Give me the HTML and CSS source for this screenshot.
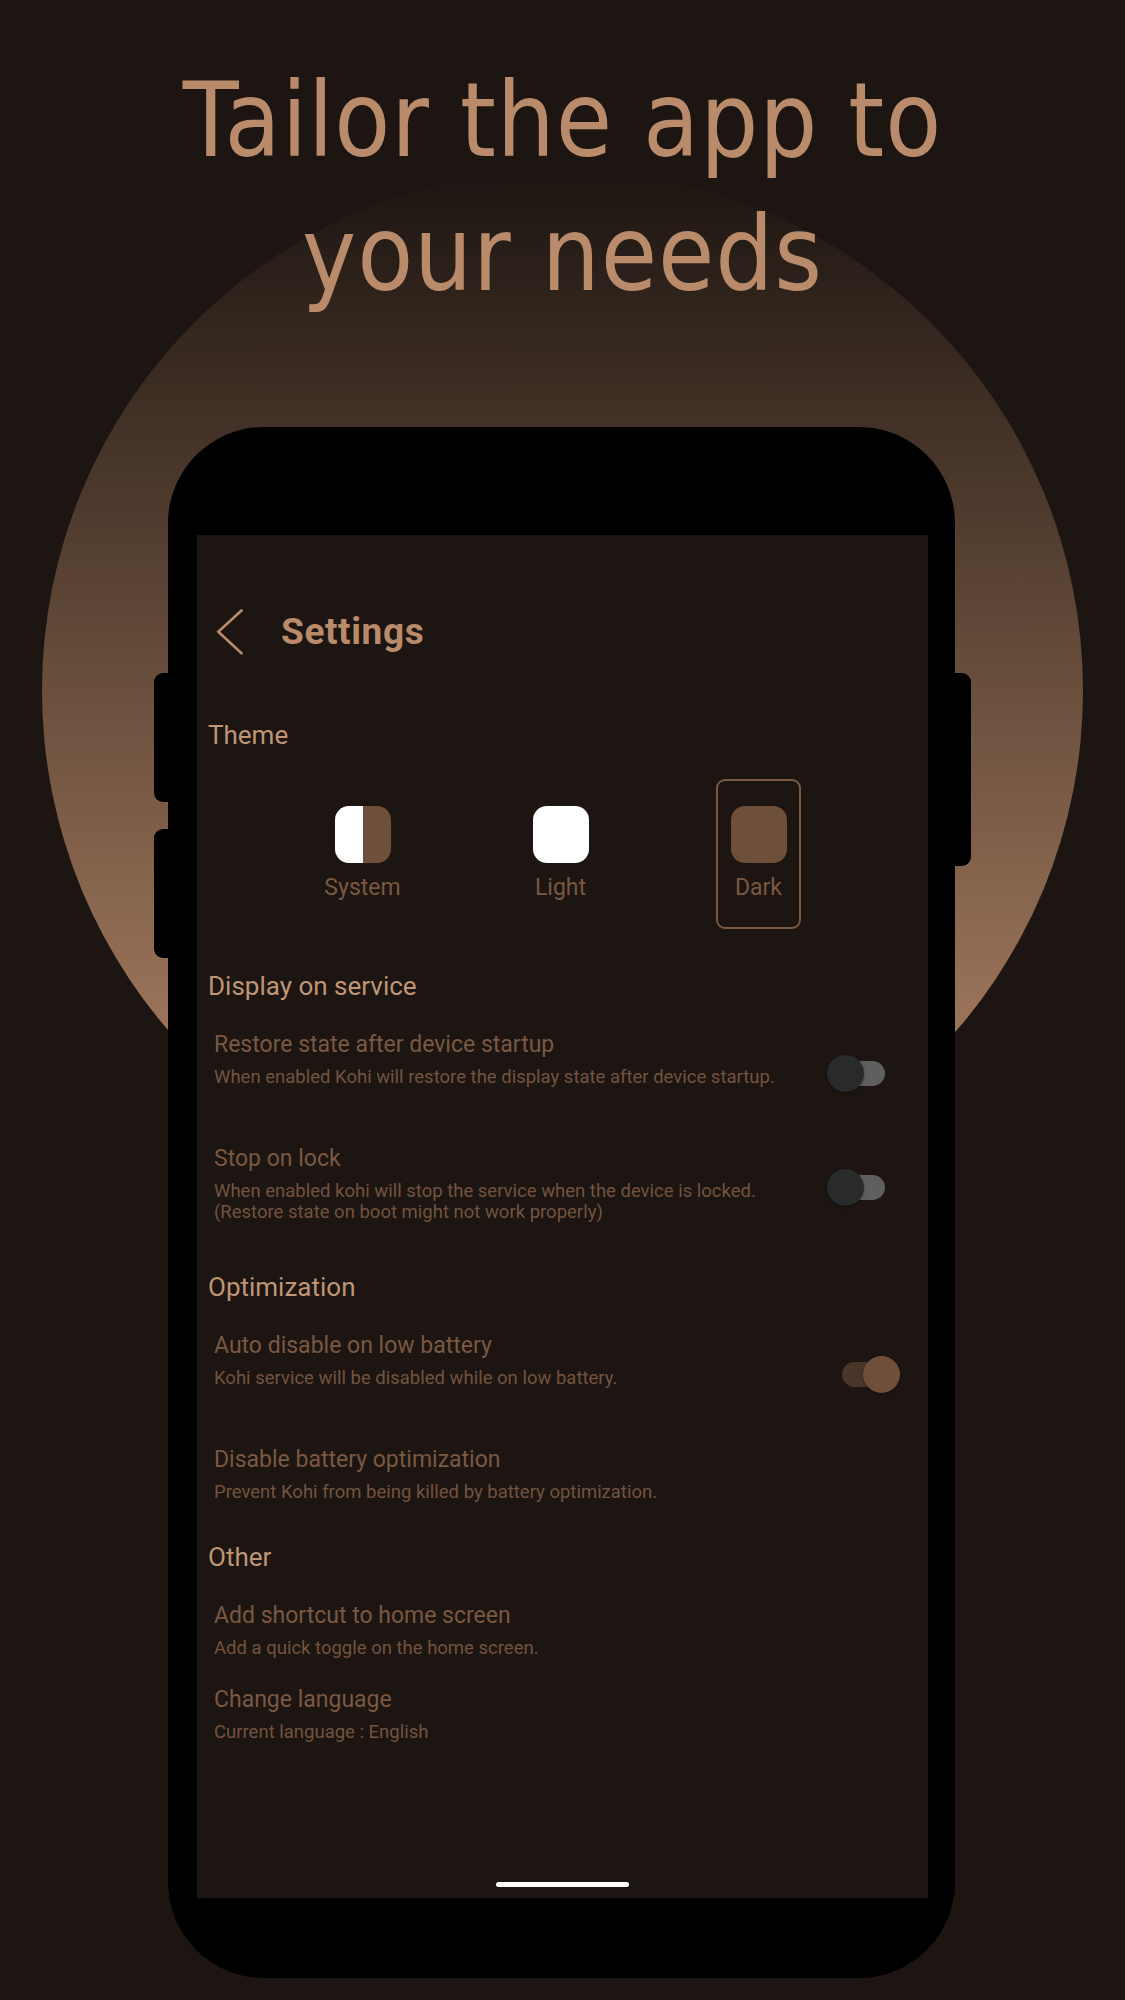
FILE: index.html
```html
<!DOCTYPE html>
<html lang="en">
<head>
<meta charset="utf-8">
<title>Tailor the app to your needs</title>
<link rel="stylesheet" href="styles.css">
</head>
<body>
<div class="stage">
  <div class="halo"></div>
  <h1 class="headline">Tailor the app to<br>your needs</h1>
  <div class="phone">
    <span class="side-btn btn-l1"></span>
    <span class="side-btn btn-l2"></span>
    <span class="side-btn btn-r"></span>
    <div class="screen">
      <header class="appbar">
        <svg class="back" width="27" height="46" viewBox="0 0 27 46" aria-hidden="true">
          <polyline points="25.5,1.5 2.3,22.8 25.5,44.2" fill="none" stroke="#b88b6b" stroke-width="2.6" stroke-linecap="round" stroke-linejoin="miter"/>
        </svg>
        <span class="appbar-title">Settings</span>
      </header>

      <h2 class="section-head theme-head">Theme</h2>
      <div class="themes">
        <div class="theme-opt">
          <span class="swatch swatch-system"></span>
          <span class="theme-label">System</span>
        </div>
        <div class="theme-opt">
          <span class="swatch swatch-light"></span>
          <span class="theme-label">Light</span>
        </div>
        <div class="theme-opt selected">
          <span class="swatch swatch-dark"></span>
          <span class="theme-label">Dark</span>
        </div>
      </div>

      <h2 class="section-head">Display on service</h2>
      <div class="pref has-switch">
        <div class="pref-text">
          <div class="pref-title">Restore state after device startup</div>
          <div class="pref-desc">When enabled Kohi will restore the display state after device startup.</div>
        </div>
        <span class="switch"><span class="track"></span><span class="thumb"></span></span>
      </div>
      <div class="pref has-switch">
        <div class="pref-text">
          <div class="pref-title">Stop on lock</div>
          <div class="pref-desc">When enabled kohi will stop the service when the device is locked.<br>(Restore state on boot might not work properly)</div>
        </div>
        <span class="switch"><span class="track"></span><span class="thumb"></span></span>
      </div>

      <h2 class="section-head">Optimization</h2>
      <div class="pref has-switch">
        <div class="pref-text">
          <div class="pref-title">Auto disable on low battery</div>
          <div class="pref-desc">Kohi service will be disabled while on low battery.</div>
        </div>
        <span class="switch on"><span class="track"></span><span class="thumb"></span></span>
      </div>
      <div class="pref">
        <div class="pref-text">
          <div class="pref-title">Disable battery optimization</div>
          <div class="pref-desc">Prevent Kohi from being killed by battery optimization.</div>
        </div>
      </div>

      <h2 class="section-head other-head">Other</h2>
      <div class="pref">
        <div class="pref-text">
          <div class="pref-title">Add shortcut to home screen</div>
          <div class="pref-desc">Add a quick toggle on the home screen.</div>
        </div>
      </div>
      <div class="pref tight">
        <div class="pref-text">
          <div class="pref-title">Change language</div>
          <div class="pref-desc">Current language : English</div>
        </div>
      </div>

      <span class="home-bar"></span>
    </div>
  </div>
</div>
</body>
</html>
```

FILE: styles.css
```css
* { box-sizing: border-box; }

html, body {
  margin: 0;
  padding: 0;
  background: #1c1511;
}

.stage {
  position: relative;
  width: 1125px;
  height: 2000px;
  overflow: hidden;
  background: #1c1511;
}

.halo {
  position: absolute;
  left: 42px;
  top: 170px;
  width: 1041px;
  height: 1041px;
  border-radius: 50%;
  background: linear-gradient(to bottom, #1c1511 0%, #6a4f3d 50%, #b6886a 100%);
  z-index: 0;
}

.headline {
  position: relative;
  z-index: 1;
  margin: 0;
  padding-top: 53px;
  font-family: "DejaVu Sans", "Noto Sans", sans-serif;
  font-weight: 400;
  font-size: 103px;
  line-height: 134px;
  letter-spacing: 1px;
  text-align: center;
  color: #ba8b6b;
  transform: scaleX(0.89);
  transform-origin: 50% 0;
}

.phone {
  position: relative;
  z-index: 1;
  width: 787px;
  height: 1551px;
  margin: 106px 0 0 168px;
  padding: 108px 27px 80px 29px;
  background: #000;
  border-radius: 96px;
}

.side-btn {
  position: absolute;
  background: #000;
  width: 17px;
}
.btn-l1 { left: -14px; top: 246px; height: 129px; border-radius: 9px 0 0 9px; }
.btn-l2 { left: -14px; top: 402px; height: 129px; border-radius: 9px 0 0 9px; }
.btn-r  { right: -16px; top: 246px; height: 193px; border-radius: 0 9px 9px 0; }

.screen {
  height: 1363px;
  background: #1c1511;
  display: flex;
  flex-direction: column;
  font-family: Roboto, "Liberation Sans", sans-serif;
}

.appbar {
  display: flex;
  align-items: center;
  height: 46px;
  margin-top: 74px;
  padding-left: 19px;
}
.back { display: block; flex: none; }
.appbar-title {
  margin-left: 38px;
  font-size: 37px;
  line-height: 44px;
  font-weight: 700;
  letter-spacing: 0.6px;
  color: #b98b6b;
}

.section-head {
  margin: 41px 0 0;
  padding-left: 11px;
  font-size: 26px;
  line-height: 32px;
  font-weight: 400;
  color: #bf9575;
}
.section-head.theme-head { margin-top: 64px; }
.section-head.other-head { margin-top: 38px; }

.themes {
  display: flex;
  justify-content: center;
  gap: 113px;
  margin-top: 28px;
  padding-right: 4px;
}
.theme-opt {
  width: 85px;
  height: 150px;
  display: flex;
  flex-direction: column;
  align-items: center;
  padding-top: 25px;
  border: 2px solid transparent;
  border-radius: 9px;
}
.theme-opt.selected { border-color: #7a5842; }
.swatch {
  width: 56px;
  height: 57px;
  border-radius: 14px;
}
.swatch-system { background: linear-gradient(to right, #ffffff 0 50%, #6e4f3a 50% 100%); }
.swatch-light { background: #ffffff; }
.swatch-dark { background: #6e4f3a; }
.theme-label {
  margin-top: 11px;
  font-size: 23px;
  line-height: 28px;
  color: #7a5842;
}

.pref {
  display: flex;
  align-items: center;
  justify-content: space-between;
  margin-top: 29px;
  padding: 0 28px 0 17px;
}
.pref.tight { margin-top: 27px; }
.pref.has-switch { min-height: 85px; }
.pref-text { align-self: flex-start; }
.pref-title {
  font-size: 23px;
  line-height: 28px;
  color: #7a5842;
}
.pref-desc {
  margin-top: 8px;
  font-size: 18.5px;
  line-height: 21px;
  color: #735340;
}

.switch {
  position: relative;
  flex: none;
  width: 73px;
  height: 37px;
}
.switch .track {
  position: absolute;
  left: 15px;
  right: 15px;
  top: 6px;
  height: 25px;
  border-radius: 13px;
  background: #5f5f5f;
}
.switch .thumb {
  position: absolute;
  left: 0;
  top: 0;
  width: 37px;
  height: 37px;
  border-radius: 50%;
  background: #292a2b;
  box-shadow: 0 1px 3px rgba(0, 0, 0, 0.35);
}
.switch.on .track { background: #4a3629; }
.switch.on .thumb { left: auto; right: 0; background: #6f4f3a; }

.home-bar {
  align-self: center;
  margin-top: auto;
  margin-bottom: 11px;
  width: 133px;
  height: 5px;
  border-radius: 3px;
  background: #ffffff;
}
```
